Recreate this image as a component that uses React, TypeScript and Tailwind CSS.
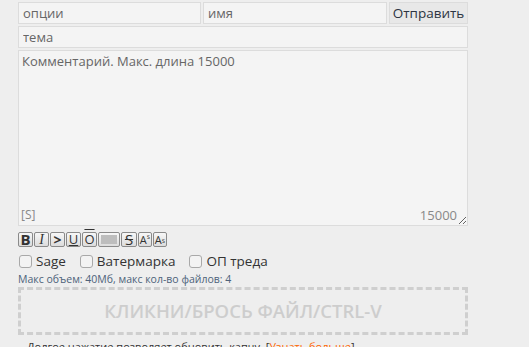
import React from 'react';

const font = "font-['Open_Sans','Liberation_Sans',sans-serif]";

const ToolBtn: React.FC<{ children: React.ReactNode; className?: string; w?: string }> = ({ children, className = '', w = 'w-[15px]' }) => (
  <div
    className={`${w} h-[15px] flex items-center justify-center border border-[#8a8a8a] rounded-[2px] bg-gradient-to-b from-[#f7f7f7] to-[#dcdcdc] text-[#333] leading-none ${className}`}
  >
    {children}
  </div>
);

const Check: React.FC<{ label: string }> = ({ label }) => (
  <label className="flex items-center gap-[4px]">
    <span className="w-[13px] h-[13px] border border-[#a9a9a9] rounded-[3px] bg-[#f3f3f3]" />
    <span className="text-[13.5px] text-[#333]">{label}</span>
  </label>
);

const App: React.FC = () => {
  return (
    <div className={`min-h-screen bg-[#eeeeee] pt-[2px] pl-[18px] overflow-hidden ${font}`}>
      <form className="w-[450px] flex flex-col">
        <div className="flex gap-[2px] h-[22px]">
          <input
            placeholder="опции"
            className="w-[183px] h-full px-[4px] bg-[#f4f4f4] border border-[#dcdcdc] text-[13px] text-[#333] placeholder:text-[#666] outline-none"
          />
          <input
            placeholder="имя"
            className="w-[184px] h-full px-[4px] bg-[#f4f4f4] border border-[#dcdcdc] text-[13px] text-[#333] placeholder:text-[#666] outline-none"
          />
          <button
            type="button"
            className="flex-1 h-full bg-[#e8e8e8] border border-[#dcdcdc] text-[13.5px] text-[#2c3442]"
          >
            Отправить
          </button>
        </div>
        <input
          placeholder="тема"
          className="mt-[2px] h-[22px] px-[4px] bg-[#f4f4f4] border border-[#dcdcdc] text-[13px] text-[#333] placeholder:text-[#666] outline-none"
        />
        <div className="relative mt-[2px] h-[176px]">
          <textarea
            placeholder="Комментарий. Макс. длина 15000"
            className="w-full h-full px-[3px] py-[1px] bg-[#f4f4f4] border border-[#dcdcdc] text-[13px] text-[#333] placeholder:text-[#666] outline-none resize"
          />
          <span className="absolute left-[3px] bottom-[2px] text-[12px] text-[#888]">[S]</span>
          <span className="absolute right-[11px] bottom-[1px] text-[13px] text-[#888]">15000</span>
        </div>
        <div className="mt-[6px] flex gap-[1px] text-[13px]">
          <ToolBtn className="font-bold text-[15px]">B</ToolBtn>
          <ToolBtn className="italic font-['Liberation_Serif',serif] text-[14px]">I</ToolBtn>
          <ToolBtn className="text-[#6a9a1f] font-bold text-[14px]">&gt;</ToolBtn>
          <ToolBtn className="underline text-[13px]">U</ToolBtn>
          <ToolBtn className="overline text-[13px]">O</ToolBtn>
          <ToolBtn w="w-[22px]" className="p-[2px]">
            <span className="block w-full h-full bg-[#bdbdbd]" />
          </ToolBtn>
          <ToolBtn w="w-[16px]" className="line-through text-[15px]">S</ToolBtn>
          <ToolBtn w="w-[14px]" className="text-[11px]">
            A<sup className="text-[6px]">S</sup>
          </ToolBtn>
          <ToolBtn w="w-[14px]" className="text-[11px]">
            A<sub className="text-[6px]">S</sub>
          </ToolBtn>
        </div>
        <div className="mt-[6px] h-[17px] flex items-center gap-[14px] pl-[1px]">
          <Check label="Sage" />
          <Check label="Ватермарка" />
          <Check label="ОП треда" />
        </div>
        <div className="mt-[2px] text-[10.5px] leading-[14px] text-[#4d627a]">
          Макс объем: 40Мб, макс кол-во файлов: 4
        </div>
        <div className="mt-[1px] h-[48px] border-[3px] border-dashed border-[#cfcfcf] flex items-center justify-center">
          <span className="text-[18.5px] font-semibold text-[#cdcdcd]">
            КЛИКНИ/БРОСЬ ФАЙЛ/CTRL-V
          </span>
        </div>
        <div className="mt-[5px] pl-[9px] text-[11px] leading-[14px] text-[#333] whitespace-nowrap">
          Долгое нажатие позволяет обновить капчу. [<span className="text-[#ff6600]">Узнать больше</span>]
        </div>
      </form>
    </div>
  );
};

export default App;
